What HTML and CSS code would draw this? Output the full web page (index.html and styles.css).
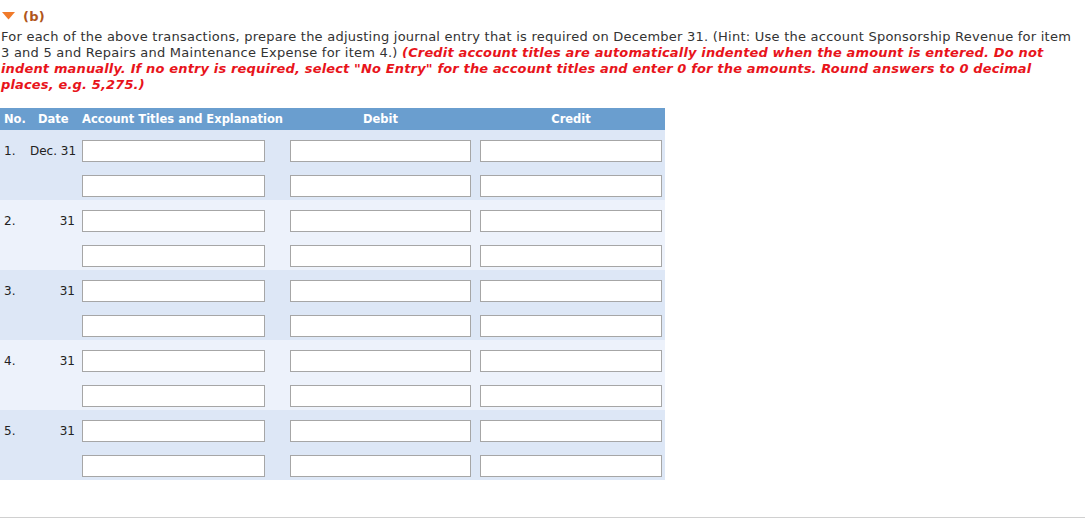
FILE: index.html
```html
<!DOCTYPE html>
<html>
<head>
<meta charset="utf-8">
<link rel="stylesheet" href="styles.css">
</head>
<body>
<div class="part">
  <div class="part-head">
    <svg class="caret" width="13" height="8" viewBox="0 0 13 8"><polygon points="0,0 13,0 6.5,7.5" fill="#f07a2a"/></svg>
    <span class="part-label">(b)</span>
  </div>
  <p class="prompt">For each of the above transactions, prepare the adjusting journal entry that is required on December 31. (Hint: Use the account Sponsorship Revenue for item 3 and 5 and Repairs and Maintenance Expense for item 4.) <em class="note">(Credit account titles are automatically indented when the amount is entered. Do not indent manually. If no entry is required, select "No Entry" for the account titles and enter 0 for the amounts. Round answers to 0 decimal places, e.g. 5,275.)</em></p>

  <div class="journal">
    <div class="jrow head">
      <div class="c-no">No.</div>
      <div class="c-date">Date</div>
      <div class="c-acct">Account Titles and Explanation</div>
      <div class="c-debit">Debit</div>
      <div class="c-credit">Credit</div>
    </div>

    <div class="entry dark">
      <div class="jrow">
        <div class="c-no">1.</div><div class="c-date">Dec. 31</div>
        <input class="in-acct" type="text"><input class="in-debit" type="text"><input class="in-credit" type="text">
      </div>
      <div class="jrow">
        <div class="c-no"></div><div class="c-date"></div>
        <input class="in-acct" type="text"><input class="in-debit" type="text"><input class="in-credit" type="text">
      </div>
    </div>

    <div class="entry light">
      <div class="jrow">
        <div class="c-no">2.</div><div class="c-date">31</div>
        <input class="in-acct" type="text"><input class="in-debit" type="text"><input class="in-credit" type="text">
      </div>
      <div class="jrow">
        <div class="c-no"></div><div class="c-date"></div>
        <input class="in-acct" type="text"><input class="in-debit" type="text"><input class="in-credit" type="text">
      </div>
    </div>

    <div class="entry dark">
      <div class="jrow">
        <div class="c-no">3.</div><div class="c-date">31</div>
        <input class="in-acct" type="text"><input class="in-debit" type="text"><input class="in-credit" type="text">
      </div>
      <div class="jrow">
        <div class="c-no"></div><div class="c-date"></div>
        <input class="in-acct" type="text"><input class="in-debit" type="text"><input class="in-credit" type="text">
      </div>
    </div>

    <div class="entry light">
      <div class="jrow">
        <div class="c-no">4.</div><div class="c-date">31</div>
        <input class="in-acct" type="text"><input class="in-debit" type="text"><input class="in-credit" type="text">
      </div>
      <div class="jrow">
        <div class="c-no"></div><div class="c-date"></div>
        <input class="in-acct" type="text"><input class="in-debit" type="text"><input class="in-credit" type="text">
      </div>
    </div>

    <div class="entry dark">
      <div class="jrow">
        <div class="c-no">5.</div><div class="c-date">31</div>
        <input class="in-acct" type="text"><input class="in-debit" type="text"><input class="in-credit" type="text">
      </div>
      <div class="jrow">
        <div class="c-no"></div><div class="c-date"></div>
        <input class="in-acct" type="text"><input class="in-debit" type="text"><input class="in-credit" type="text">
      </div>
    </div>
  </div>
</div>
<div class="divider"></div>
</body>
</html>
```

FILE: styles.css
```css
html, body {
  margin: 0;
  padding: 0;
  background: #ffffff;
}
body {
  font-family: "DejaVu Sans", Verdana, sans-serif;
  color: #333333;
  height: 524px;
  overflow: hidden;
}
.part {
  padding: 0 0 0 1px;
}
.part-head {
  display: flex;
  align-items: center;
  height: 16px;
  padding-top: 8px;
}
.caret {
  margin-left: 1px;
  margin-right: 8px;
}
.part-label {
  font-weight: bold;
  font-size: 13px;
  color: #b0561c;
  letter-spacing: 0.3px;
}
.prompt {
  margin: 5px 0 0 0;
  font-size: 13px;
  line-height: 16px;
  width: 1080px;
  letter-spacing: 0.24px;
}
.note {
  color: #e8141b;
  font-weight: bold;
  font-style: italic;
  letter-spacing: 0.15px;
}
.journal {
  margin-top: 15px;
  width: 665px;
  margin-left: -1px;
}
.jrow {
  display: grid;
  grid-template-columns: 30px 52px 183px 25px 181px 9px 182px;
  align-items: center;
  white-space: nowrap;
}
.jrow.head {
  background: #6a9ecf;
  height: 22px;
  color: #ffffff;
  font-weight: bold;
  font-size: 11.5px;
}
.head .c-no { padding-left: 4px; }
.head .c-date { padding-left: 8px; }
.head .c-acct { grid-column: 3 / 5; padding-left: 0; }
.head .c-debit { grid-column: 5; text-align: center; }
.head .c-credit { grid-column: 7; text-align: center; }

.entry {
  padding: 10px 0 3px 0;
  display: flex;
  flex-direction: column;
  gap: 13px;
  font-size: 12px;
  color: #222222;
}
.entry.dark { background: #dde7f6; }
.entry.light { background: #edf2fb; }
.entry .c-no { padding-left: 4px; }
.entry .c-date { text-align: right; padding-right: 7px; }

input {
  box-sizing: border-box;
  height: 22px;
  margin: 0;
  padding: 0 3px;
  border: 1px solid #a6a6a6;
  background: #ffffff;
  font-family: inherit;
}
.in-acct { grid-column: 3; width: 183px; }
.in-debit { grid-column: 5; width: 181px; }
.in-credit { grid-column: 7; width: 182px; }

.divider {
  margin-top: 37px;
  border-top: 1px solid #d0d0d0;
}
```
